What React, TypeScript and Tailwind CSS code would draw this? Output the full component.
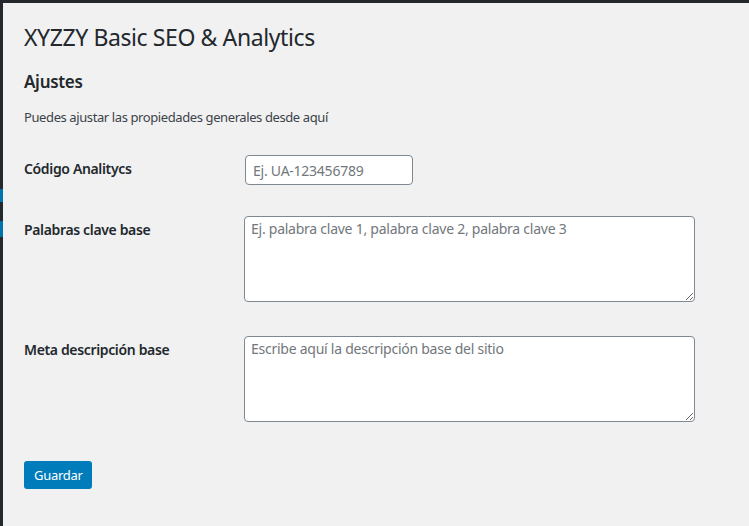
import React from 'react';

const font = { fontFamily: '"Segoe UI", "Noto Sans", "Open Sans", sans-serif' };

function Row({ label, children, className = '' }: { label: string; children: React.ReactNode; className?: string }) {
    return (
        <div className={`flex ${className}`}>
            <div className="w-[220px] shrink-0 pt-[20px] pb-[20px] pr-[20px] text-[14px] leading-[18px] font-semibold tracking-[-0.35px] text-[#23282d]">
                {label}
            </div>
            <div className="py-[15px] px-0">{children}</div>
        </div>
    );
}

export default function App() {
    return (
        <div className="w-[749px] h-[526px] bg-[#f1f1f1] flex flex-col overflow-hidden" style={font}>
            <div className="h-[3px] bg-[#23282d] shrink-0" />
            <div className="flex flex-1">
                <div className="w-[3px] bg-[#23282d] relative shrink-0">
                    <div className="absolute left-0 top-[186px] w-[3px] h-[13px] bg-[#0073aa]" />
                    <div className="absolute left-0 top-[218px] w-[3px] h-[16px] bg-[#0073aa]" />
                </div>
                <div className="flex-1 pl-[21px] pt-[19px]">
                    <h1 className="text-[23px] leading-[30px] font-normal tracking-[-0.4px] text-[#23282d]">XYZZY Basic SEO &amp; Analytics</h1>
                    <h2 className="mt-[19px] text-[17px] leading-[22px] font-semibold tracking-[-0.3px] text-[#23282d]">Ajustes</h2>
                    <p className="mt-[15px] text-[13px] leading-[18px] tracking-[-0.4px] text-[#3c434a]">
                        Puedes ajustar las propiedades generales desde aquí
                    </p>
                    <div className="mt-[14px]">
                        <Row label="Código Analitycs">
                            <input
                                className="ml-[1px] w-[168px] h-[30px] rounded-[4px] border border-[#7e8993] bg-white px-[7px] text-[14px] tracking-[-0.25px] text-[#32373c] placeholder:text-[#72777c] outline-none"
                                placeholder="Ej. UA-123456789"
                                style={font}
                            />
                        </Row>
                        <Row label="Palabras clave base" className="mt-[1px]">
                            <textarea
                                className="block w-[451px] h-[86px] rounded-[4px] border border-[#7e8993] bg-white px-[6px] py-[2px] text-[14px] leading-[20px] tracking-[-0.25px] text-[#32373c] placeholder:text-[#72777c] outline-none"
                                placeholder="Ej. palabra clave 1, palabra clave 2, palabra clave 3"
                                style={font}
                            />
                        </Row>
                        <Row label="Meta descripción base" className="mt-[4px]">
                            <textarea
                                className="block w-[451px] h-[86px] rounded-[4px] border border-[#7e8993] bg-white px-[6px] py-[2px] text-[14px] leading-[20px] tracking-[-0.25px] text-[#32373c] placeholder:text-[#72777c] outline-none"
                                placeholder="Escribe aquí la descripción base del sitio"
                                style={font}
                            />
                        </Row>
                    </div>
                    <button
                        className="mt-[24px] h-[28px] px-[10px] rounded-[3px] bg-[#007cba] text-white text-[13px] leading-[26px] tracking-[-0.3px]"
                        style={font}
                    >
                        Guardar
                    </button>
                </div>
            </div>
        </div>
    );
}
